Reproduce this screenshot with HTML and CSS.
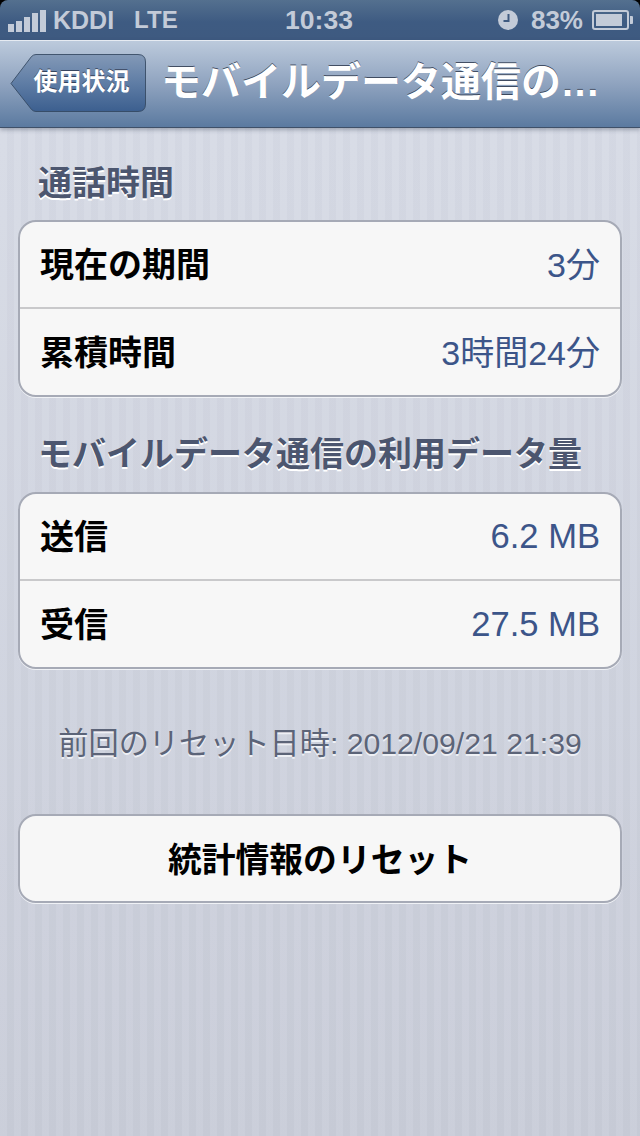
FILE: index.html
```html
<!DOCTYPE html>
<html lang="ja">
<head>
    <meta charset="UTF-8">
    <meta name="viewport" content="width=device-width, initial-scale=1.0">
    <title>モバイルデータ通信の利用状況</title>
    <link rel="stylesheet" href="styles.css">
</head>
<body>
    <div class="status-wrap">
        <div class="status-bar">
            <div class="status-left">
                <div class="signal">
                    <span class="bar bar-1"></span>
                    <span class="bar bar-2"></span>
                    <span class="bar bar-3"></span>
                    <span class="bar bar-4"></span>
                    <span class="bar bar-5"></span>
                </div>
                <span class="carrier">KDDI</span>
                <span class="network">LTE</span>
            </div>
            <div class="status-time">10:33</div>
            <div class="status-right">
                <svg class="clock" width="20" height="20" viewBox="0 0 20 20">
                    <circle cx="10" cy="10" r="10" fill="#c3cbd8"/>
                    <path d="M10.500 4v7H5.500" fill="none" stroke="#3f5a80" stroke-width="2"/>
                </svg>
                <span class="battery-text">83%</span>
                <svg class="battery" width="42" height="20" viewBox="0 0 42 20">
                    <rect x="1" y="1" width="35" height="18" rx="2" fill="none" stroke="#c3cbd8" stroke-width="2"/>
                    <rect x="4" y="4" width="26" height="12" fill="#c3cbd8"/>
                    <path d="M38 6h2a1 1 0 0 1 1 1v6a1 1 0 0 1-1 1h-2z" fill="#c3cbd8"/>
                </svg>
            </div>
        </div>
    </div>

    <div class="nav-bar">
        <button class="back-button" type="button">
            <svg class="back-shape" width="137" height="60" viewBox="0 0 137 60">
                <defs>
                    <linearGradient id="backFill" x1="0" y1="0" x2="0" y2="1">
                        <stop offset="0" stop-color="#8399b7"/>
                        <stop offset="0.5" stop-color="#5f7da5"/>
                        <stop offset="1" stop-color="#3c5f8f"/>
                    </linearGradient>
                </defs>
                <path d="M1 29.500 21.500 2.500Q23.500 0.500 26 0.500H128Q135.500 0.500 135.500 8V50Q135.500 57.500 128 57.500H26Q23.500 57.500 21.500 55.500Z" fill="url(#backFill)" stroke="#33475f" stroke-opacity="0.85"/>
            </svg>
            <span class="back-label">使用状況</span>
        </button>
        <h1 class="nav-title">モバイルデータ通信の<span class="nav-ellipsis">...</span></h1>
    </div>

    <div class="content">
        <h2 class="section-title">通話時間</h2>
        <div class="group">
            <div class="row">
                <span class="row-label">現在の期間</span>
                <span class="row-value row-value-cjk">3分</span>
            </div>
            <div class="row">
                <span class="row-label">累積時間</span>
                <span class="row-value row-value-cjk">3時間24分</span>
            </div>
        </div>

        <h2 class="section-title section-title-data">モバイルデータ通信の利用データ量</h2>
        <div class="group">
            <div class="row">
                <span class="row-label">送信</span>
                <span class="row-value">6.2 MB</span>
            </div>
            <div class="row">
                <span class="row-label">受信</span>
                <span class="row-value">27.5 MB</span>
            </div>
        </div>

        <p class="reset-note">前回のリセット日時: 2012/09/21 21:39</p>

        <button class="reset-button" type="button">統計情報のリセット</button>
    </div>
</body>
</html>
```

FILE: styles.css
```css
html, body {
    margin: 0;
    padding: 0;
}

body {
    width: 640px;
    height: 1136px;
    overflow: hidden;
    font-family: "Liberation Sans", "Noto Sans CJK JP", sans-serif;
    background-color: #cfd3df;
    background-image:
        repeating-linear-gradient(90deg, rgba(255, 255, 255, 0.05) 0, rgba(255, 255, 255, 0.05) 7px, rgba(0, 0, 0, 0.01) 7px, rgba(0, 0, 0, 0.01) 14px),
        linear-gradient(180deg, #d8dce7 0, #c8ccd8 100%);
}

/* status bar */
.status-wrap {
    background: #000;
}

.status-bar {
    height: 40px;
    box-sizing: border-box;
    display: flex;
    align-items: center;
    padding: 0 8px;
    color: #c3cbd8;
    font-size: 26px;
    background: linear-gradient(180deg, #54708f 0, #3e5b82 55%, #3e5a80 100%);
    border-radius: 8px 8px 0 0;
}

.status-left {
    display: flex;
    align-items: center;
    flex: 1;
}

.signal {
    display: flex;
    align-items: flex-end;
    gap: 2px;
    height: 22px;
    margin-top: 2px;
    margin-right: 7px;
}

.bar {
    display: block;
    width: 6px;
    background: #c3cbd8;
}

.bar-1 { height: 8px; }
.bar-2 { height: 11px; }
.bar-3 { height: 15px; }
.bar-4 { height: 19px; }
.bar-5 { height: 22px; }

.carrier,
.network {
    font-weight: 700;
    font-size: 25px;
}

.network {
    margin-left: 20px;
    font-size: 24px;
}

.status-time {
    font-size: 26.500px;
    font-weight: 700;
    flex: 0 0 auto;
    margin-left: -2px;
}

.status-right {
    display: flex;
    align-items: center;
    flex: 1;
    justify-content: flex-end;
    gap: 13px;
    font-weight: 700;
}

.battery {
    margin-left: -4px;
    margin-right: -2px;
}

/* nav bar */
.nav-bar {
    height: 88px;
    box-sizing: border-box;
    display: flex;
    align-items: center;
    padding: 0 10px 1px 10px;
    background: linear-gradient(180deg, #bccadc 0, #8fa3bf 50%, #5b7aa0 100%);
    border-top: 1px solid #e6ebf2;
    border-bottom: 1px solid #3f5068;
    box-shadow: 0 2px 4px rgba(50, 60, 80, 0.35);
}

.back-button {
    position: relative;
    flex: 0 0 137px;
    width: 137px;
    height: 60px;
    padding: 0;
    border: none;
    background: none;
    font-family: inherit;
}

.back-shape {
    position: absolute;
    left: 0;
    top: 0;
}

.back-label {
    position: relative;
    display: block;
    padding: 0 0 8px 6px;
    color: #fff;
    font-size: 24px;
    font-weight: 700;
    text-shadow: 0 -1px 0 rgba(30, 40, 60, 0.7);
}

.nav-title {
    margin: 0 0 0 14px;
    padding-bottom: 9px;
    font-size: 40px;
    font-weight: 700;
    color: #fff;
    white-space: nowrap;
    text-shadow: 0 -1px 0 rgba(40, 50, 70, 0.8);
}

.nav-ellipsis {
    margin-left: 1px;
    letter-spacing: 1.500px;
}

/* content */
.content {
    padding: 0 18px;
}

.section-title {
    margin: 32px 0 14px 20px;
    height: 46px;
    line-height: 46px;
    font-size: 34px;
    font-weight: 700;
    color: #4c566f;
    text-shadow: 0 2px 0 #fff;
}

.section-title-data {
    margin-top: 34px;
    margin-bottom: 15px;
    white-space: nowrap;
}

.group {
    background: #f7f7f7;
    border: 2px solid #a6aab6;
    border-radius: 18px;
    box-shadow: 0 1px 0 #f0f2f6;
}

.row {
    height: 85px;
    display: flex;
    align-items: center;
    justify-content: space-between;
    padding: 0 20px;
}

.row + .row {
    height: 86px;
    border-top: 2px solid #c9c9cb;
}

.row-label {
    padding-bottom: 4px;
    font-size: 34px;
    font-weight: 700;
    color: #000;
}

.row-value {
    font-size: 34.600px;
    color: #3c5589;
}

.row-value-cjk {
    padding-bottom: 4px;
    font-size: 34px;
}

.reset-note {
    margin: 54px 0 0;
    text-align: center;
    font-size: 30.200px;
    line-height: 42px;
    white-space: nowrap;
    color: #5c6478;
    text-shadow: 0 2px 0 #eef0f5;
}

.reset-button {
    display: block;
    width: 100%;
    height: 89px;
    margin-top: 49px;
    padding: 0 0 3px;
    background: #f7f7f7;
    border: 2px solid #a6aab6;
    border-radius: 18px;
    box-shadow: 0 1px 0 #f0f2f6;
    font-family: inherit;
    font-size: 33.800px;
    font-weight: 700;
    color: #000;
}
```
